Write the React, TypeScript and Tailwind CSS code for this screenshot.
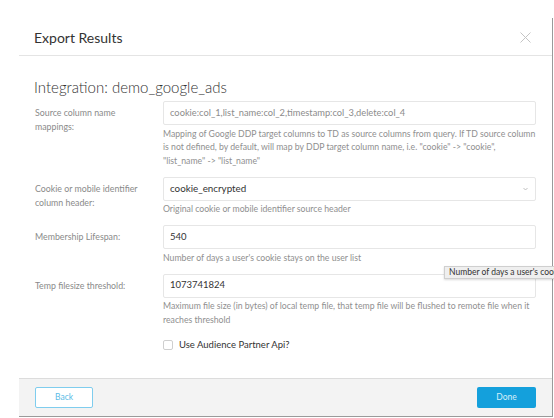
import React from "react";

const font = { fontFamily: "Lato, 'Open Sans', sans-serif" };

function Label({ children }: { children: React.ReactNode }) {
  return (
    <div className="w-[128px] shrink-0 pr-[14px] pt-[5px] text-[8.8px] leading-[14px] text-[#8a8a8a]">
      {children}
    </div>
  );
}

function Help({ children }: { children: React.ReactNode }) {
  return <div className="mt-[1.5px] text-[8.7px] leading-[13.5px] text-[#8f8f8f]">{children}</div>;
}

export default function App() {
  return (
    <div className="relative w-[554px] h-[418px] overflow-hidden bg-white" style={font}>
      <div className="ml-[19px] mt-[18px] w-[534px] h-[399px] flex flex-col bg-white border-r border-b border-[#9a9a9a]">
        {/* header */}
        <div className="h-[38px] shrink-0 flex items-center justify-between pl-[15px] pr-[21px] border-b border-[#e4e4e4]">
          <div className="text-[14px] text-[#333] pt-[1px]">Export Results</div>
          <svg width="11" height="11" viewBox="0 0 11 11" className="mt-[1px]">
            <path d="M0.5 0.5 L10.5 10.5 M10.5 0.5 L0.5 10.5" stroke="#c4c4c4" strokeWidth="1" />
          </svg>
        </div>
        {/* body */}
        <div className="flex-1 px-[16px] pt-[21px]">
          <div className="text-[15px] leading-[20px] font-light text-[#333] -ml-[1px]">
            Integration: demo_google_ads
          </div>
          <div className="mt-[4px] flex flex-col gap-[9.5px]">
            <div className="flex">
              <Label>Source column name mappings:</Label>
              <div className="flex-1">
                <div className="h-[24px] border border-[#e6e6e6] rounded-[2px] flex items-center px-[6px] text-[9.3px] text-[#8c8c8c]">
                  cookie:col_1,list_name:col_2,timestamp:col_3,delete:col_4
                </div>
                <Help>
                  Mapping of Google DDP target columns to TD as source columns from query. If TD source column is not defined, by default, will map by DDP target column name, i.e. "cookie" -&gt; "cookie", "list_name" -&gt; "list_name"
                </Help>
              </div>
            </div>
            <div className="flex">
              <Label>Cookie or mobile identifier column header:</Label>
              <div className="flex-1">
                <div className="h-[24px] border border-[#e6e6e6] rounded-[2px] flex items-center justify-between pl-[6px] pr-[7px] text-[9.8px] text-[#333]">
                  <span>cookie_encrypted</span>
                  <svg width="5" height="4" viewBox="0 0 5 4">
                    <path d="M0.5 1 L2.5 3 L4.5 1" stroke="#b0b0b0" strokeWidth="0.8" fill="none" />
                  </svg>
                </div>
                <Help>Original cookie or mobile identifier source header</Help>
              </div>
            </div>
            <div className="flex">
              <Label>Membership Lifespan:</Label>
              <div className="flex-1">
                <div className="h-[24px] border border-[#e6e6e6] rounded-[2px] flex items-center px-[6px] text-[9.5px] text-[#333]">
                  540
                </div>
                <Help>Number of days a user's cookie stays on the user list</Help>
              </div>
            </div>
            <div className="flex">
              <Label>Temp filesize threshold:</Label>
              <div className="flex-1">
                <div className="h-[24px] border border-[#e6e6e6] rounded-[2px] flex items-center px-[6px] text-[9.5px] text-[#333]">
                  1073741824
                </div>
                <Help>
                  Maximum file size (in bytes) of local temp file, that temp file will be flushed to remote file when it reaches threshold
                </Help>
              </div>
            </div>
          </div>
          <div className="mt-[12px] ml-[128px] flex items-center h-[14px] gap-[6px]">
            <div className="w-[10px] h-[10px] border border-[#cfcfcf] rounded-[2px] bg-white" />
            <span className="text-[9.5px] text-[#333]">Use Audience Partner Api?</span>
          </div>
        </div>
        {/* footer */}
        <div className="h-[38px] shrink-0 bg-[#f3f3f3] border-t border-[#dcdcdc] flex items-center justify-between px-[16px]">
          <button className="w-[58px] h-[21px] rounded-[2px] border border-[#7fcdee] bg-white text-[8.5px] text-[#5cbbe6]">
            Back
          </button>
          <button className="w-[59px] h-[21px] rounded-[2px] bg-[#14a0dc] text-[8.5px] text-[#d6effa]">
            Done
          </button>
        </div>
      </div>
      {/* tooltip */}
      <div className="absolute left-[444px] top-[266px] h-[13px] pl-[4px] pr-[6px] whitespace-nowrap bg-[#efefef] border border-[#cfcfcf] shadow-[0_1px_2px_rgba(0,0,0,0.15)] text-[8.5px] leading-[11px] text-[#333]">
        Number of days a user's cookie stays on the user list
      </div>
    </div>
  );
}
